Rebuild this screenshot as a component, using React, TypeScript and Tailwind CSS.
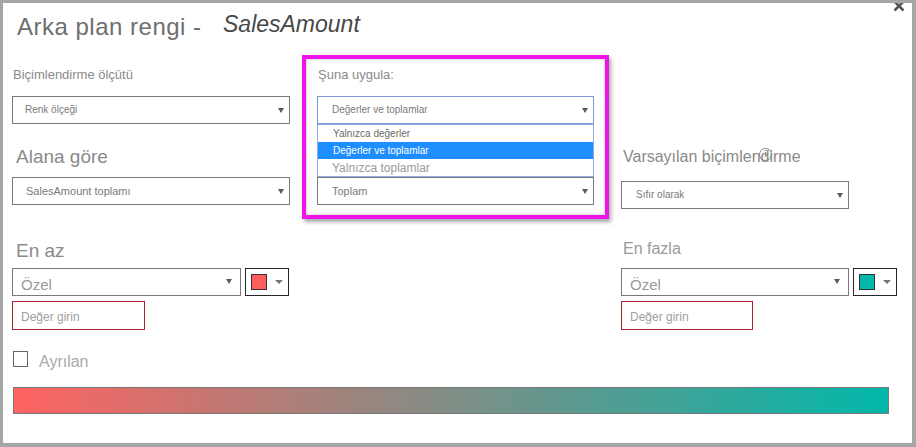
import React from "react";

const Arrow = ({ className = "" }: { className?: string }) => (
  <svg width="6" height="5" viewBox="0 0 6 5" className={className}>
    <polygon points="0,0 6,0 3,5" fill="#5a5a5a" />
  </svg>
);

const SmallArrow = () => (
  <svg width="8" height="4" viewBox="0 0 8 4">
    <polygon points="0,0 8,0 4,4" fill="#777" />
  </svg>
);

const Select = ({
  text,
  w,
  textCls = "text-[10px]",
  pl = "pl-[12px]",
  border = "border-[#7a7a7a]",
}: {
  text: string;
  w: string;
  textCls?: string;
  pl?: string;
  border?: string;
}) => (
  <div className={`${w} h-[28px] border ${border} bg-white flex items-center justify-between ${pl} pr-[5px]`}>
    <span className={`${textCls} text-[#7a7a7a] leading-none`}>{text}</span>
    <Arrow />
  </div>
);

const ColorButton = ({ color }: { color: string }) => (
  <div className="ml-[4px] w-[44px] h-[28px] border border-[#262626] flex items-center pl-[5px] gap-[8px]">
    <div className="w-[16px] h-[16px] border border-[#333]" style={{ backgroundColor: color }} />
    <SmallArrow />
  </div>
);

const Ozel = ({ w }: { w: string }) => (
  <div className={`${w} h-[28px] border border-[#7a7a7a] flex items-start justify-between pl-[8px] pr-[8px]`}>
    <span className="text-[15px] leading-[20px] text-[#9a9a9a] mt-[6px]">Özel</span>
    <Arrow className="mt-[10px]" />
  </div>
);

const Input = ({ w }: { w: string }) => (
  <div className={`${w} h-[29px] mt-[5px] border border-[#a4262c] flex items-center pl-[8px] pt-[2px]`}>
    <span className="text-[12px] text-[#a0a0a0] leading-none">Değer girin</span>
  </div>
);

export default function App() {
  return (
    <div className="w-[916px] h-[447px] bg-white border-l-[3px] border-t-[3px] border-r-[4px] border-b-[4px] border-[#a6a6a6] relative overflow-hidden font-['Liberation_Sans',Arial,sans-serif]">
      {/* close */}
      <svg className="absolute right-[7px] top-[-3px]" width="12" height="12" viewBox="0 0 12 12">
        <path d="M1.5 1.5 L10.5 10.5 M10.5 1.5 L1.5 10.5" stroke="#555" strokeWidth="2.6" />
      </svg>

      {/* title */}
      <div className="mt-[9px] pl-[14px] flex items-start">
        <span className="w-[206px] mt-[3px] text-[24px] leading-[24px] tracking-[0.5px] text-[#6e6e6e]">Arka plan rengi -</span>
        <span className="text-[23px] leading-[24px] italic text-[#474747]">SalesAmount</span>
      </div>

      {/* main */}
      <div className="mt-[16px] pl-[9px] flex items-start">
        <div className="w-[278px] flex flex-col">
          <span className="mt-[12px] pl-[1px] text-[13px] leading-[16px] text-[#8a8a8a]">Biçimlendirme ölçütü</span>
          <div className="mt-[13px]">
            <Select text="Renk ölçeği" w="w-[278px]" />
          </div>
          <span className="mt-[21px] pl-[4px] text-[19px] leading-[24px] text-[#8a8a8a]">Alana göre</span>
          <div className="mt-[8px]">
            <Select text="SalesAmount toplamı" w="w-[278px]" textCls="text-[11px]" pl="pl-[13px]" />
          </div>
        </div>

        <div className="ml-[12px] w-[307px] border-4 border-[#ef15e9] shadow-[2px_3px_4px_rgba(0,0,0,0.35),inset_0_0_3px_rgba(0,0,0,0.3)] pt-[8px] px-[11px] pb-[10px] flex flex-col">
          <span className="ml-[1px] text-[13px] leading-[16px] text-[#8a8a8a]">Şuna uygula:</span>
          <div className="mt-[13px] relative">
            <Select text="Değerler ve toplamlar" w="w-[277px]" pl="pl-[14px]" border="border-[#7a98d4]" />
            <div className="absolute left-0 top-[28px] w-[277px] border border-[#8eaee0] bg-white flex flex-col">
              <div className="h-[17px] flex items-center pl-[15px] text-[10px] text-[#6a6a6a] leading-none">Yalnızca değerler</div>
              <div className="h-[17px] flex items-center pl-[15px] text-[10px] text-white bg-[#1e8eff] leading-none">Değerler ve toplamlar</div>
              <div className="h-[17px] flex items-center pl-[14px] text-[12px] text-[#9a9a9a] leading-none">Yalnızca toplamlar</div>
            </div>
          </div>
          <div className="mt-[53px]">
            <Select text="Toplam" w="w-[277px]" textCls="text-[11px]" pl="pl-[14px]" />
          </div>
        </div>

        <div className="ml-[12px] w-[276px] flex flex-col">
          <div className="mt-[90px] pl-[2px] relative">
            <span className="text-[16px] leading-[20px] text-[#8a8a8a]">Varsayılan biçimlendirme</span>
            <div className="absolute left-[138px] top-[3px] w-[13px] h-[13px] rounded-full border border-[#8a8a8a] flex items-center justify-center text-[9px] leading-none text-[#8a8a8a] font-bold">i</div>
          </div>
          <div className="mt-[12px]">
            <Select text="Sıfır olarak" w="w-[228px]" pl="pl-[14px]" />
          </div>
        </div>
      </div>

      {/* min / max */}
      <div className="mt-[20px] pl-[9px] flex items-start">
        <div className="w-[609px] flex flex-col">
          <span className="pl-[4px] text-[19px] leading-[24px] text-[#8a8a8a]">En az</span>
          <div className="mt-[5px] flex">
            <Ozel w="w-[229px]" />
            <ColorButton color="#ff5f5a" />
          </div>
          <Input w="w-[133px]" />
        </div>
        <div className="w-[276px] flex flex-col">
          <span className="pl-[2px] text-[16px] leading-[20px] text-[#9a9a9a]">En fazla</span>
          <div className="mt-[9px] flex">
            <Ozel w="w-[228px]" />
            <ColorButton color="#01b8aa" />
          </div>
          <Input w="w-[132px]" />
        </div>
      </div>

      {/* diverging */}
      <div className="mt-[21px] pl-[10px] flex items-start">
        <div className="w-[15px] h-[16px] border border-[#666] bg-white" />
        <span className="ml-[11px] mt-[1px] text-[16px] leading-[20px] text-[#aaaaaa]">Ayrılan</span>
      </div>

      <div className="mt-[15px] ml-[10px] w-[876px] h-[27px] border border-[#777] bg-[linear-gradient(to_right,#ff6361,#01b8aa)]" />
    </div>
  );
}
